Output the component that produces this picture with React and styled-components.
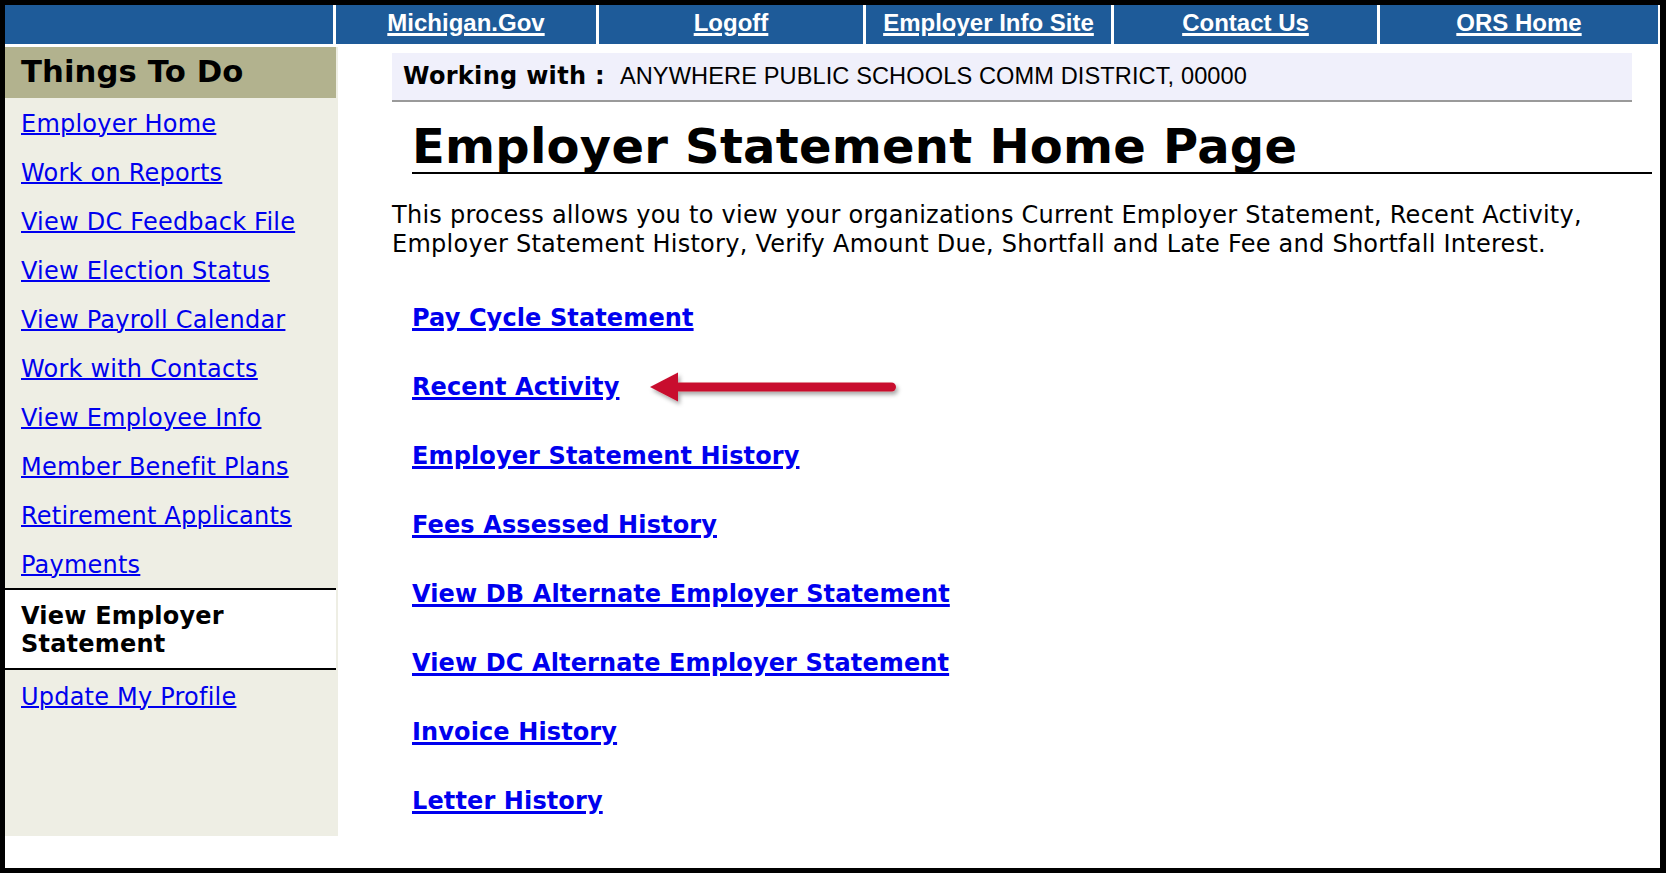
import styled, { createGlobalStyle } from "styled-components";

const GlobalStyle = createGlobalStyle`
  html, body {
    margin: 0;
    padding: 0;
    background: #000;
  }
`;

const navLinks = ["Michigan.Gov", "Logoff", "Employer Info Site", "Contact Us", "ORS Home"];

const sideLinks = [
  "Employer Home",
  "Work on Reports",
  "View DC Feedback File",
  "View Election Status",
  "View Payroll Calendar",
  "Work with Contacts",
  "View Employee Info",
  "Member Benefit Plans",
  "Retirement Applicants",
  "Payments",
];

const statementLinks = [
  "Pay Cycle Statement",
  "Recent Activity",
  "Employer Statement History",
  "Fees Assessed History",
  "View DB Alternate Employer Statement",
  "View DC Alternate Employer Statement",
  "Invoice History",
  "Letter History",
];

const Arrow = () => (
  <ArrowSvg width="256" height="36" viewBox="0 0 256 36">
    <defs>
      <filter id="arrowShadow" x="-10%" y="-40%" width="120%" height="200%">
        <feDropShadow dx="2" dy="3" stdDeviation="2" floodColor="#000" floodOpacity="0.35" />
      </filter>
    </defs>
    <g filter="url(#arrowShadow)" fill="#c8102e">
      <rect x="26" y="13.4" width="222" height="9.2" rx="4.6" />
      <polygon points="2,18 30,3.5 30,32.5" />
    </g>
  </ArrowSvg>
);

const App = () => {
  return (
    <Page>
      <GlobalStyle />
      <Nav>
        <NavCell />
        {navLinks.map((label) => (
          <NavCell key={label}>
            <NavLink href="#">{label}</NavLink>
          </NavCell>
        ))}
      </Nav>
      <Body>
        <Sidebar>
          <SideTitle>Things To Do</SideTitle>
          {sideLinks.map((label) => (
            <SideItem key={label}>
              <SideLink href="#">{label}</SideLink>
            </SideItem>
          ))}
          <SideCurrent>View Employer Statement</SideCurrent>
          <SideItem $afterCurrent>
            <SideLink href="#">Update My Profile</SideLink>
          </SideItem>
        </Sidebar>
        <Main>
          <WorkingBar>
            <WorkingLabel>Working with :</WorkingLabel>
            <WorkingValue>ANYWHERE PUBLIC SCHOOLS COMM DISTRICT, 00000</WorkingValue>
          </WorkingBar>
          <Title>Employer Statement Home Page</Title>
          <Intro>
            This process allows you to view your organizations Current Employer Statement, Recent
            Activity, Employer Statement History, Verify Amount Due, Shortfall and Late Fee and
            Shortfall Interest.
          </Intro>
          <LinkList>
            {statementLinks.map((label) => (
              <LinkRow key={label}>
                <StatementLink href="#">{label}</StatementLink>
                {label === "Recent Activity" && <Arrow />}
              </LinkRow>
            ))}
          </LinkList>
        </Main>
      </Body>
    </Page>
  );
};

const Page = styled.div`
  margin: 5px 6px 0 5px;
  height: 863px;
  background: #fff;
  overflow: hidden;
  display: flex;
  flex-direction: column;
`;

const Nav = styled.nav`
  display: grid;
  grid-template-columns: 328px 260px 264px 245px 263px 278px;
  column-gap: 3px;
  margin-bottom: 3px;
`;

const NavCell = styled.div`
  height: 39px;
  box-sizing: border-box;
  padding-top: 4px;
  background: #1e5b99;
  text-align: center;
  line-height: 28px;
`;

const NavLink = styled.a`
  color: #fff;
  font-family: "Liberation Sans", Arial, sans-serif;
  font-weight: bold;
  font-size: 24px;
  text-decoration: underline;
  text-decoration-thickness: 3px;
  text-underline-offset: 2px;
`;

const Body = styled.div`
  display: flex;
  align-items: flex-start;
  flex: 1;
`;

const Sidebar = styled.aside`
  width: 333px;
  height: 789px;
  box-sizing: border-box;
  padding-right: 2px;
  background: #eeeee4;
  font-family: "DejaVu Sans", Verdana, sans-serif;
`;

const SideTitle = styled.h2`
  margin: 0;
  height: 51px;
  box-sizing: border-box;
  padding: 7px 16px 0;
  background: #b2b28e;
  color: #000;
  font-size: 30.7px;
  font-weight: bold;
  line-height: 35px;
  letter-spacing: 0.1px;
`;

const SideItem = styled.div`
  padding: ${(p) => (p.$afterCurrent ? "13px" : "12px")} 14px 9px 16px;
  font-size: 24px;
  line-height: 28px;
  letter-spacing: 0.22px;
`;

const SideLink = styled.a`
  color: #0000ee;
  text-decoration: underline;
  text-decoration-thickness: 2px;
  text-underline-offset: 1px;
`;

const SideCurrent = styled.div`
  padding: 12px 16px 10px;
  background: #fff;
  border-top: 2px solid #000;
  border-bottom: 2px solid #000;
  color: #000;
  font-size: 24px;
  font-weight: bold;
  line-height: 28px;
  letter-spacing: 0.2px;
`;

const Main = styled.main`
  flex: 1;
  min-width: 0;
  padding: 6px 28px 0 54px;
  font-family: "DejaVu Sans", Verdana, sans-serif;
  color: #000;
`;

const WorkingBar = styled.div`
  height: 47px;
  padding: 0 11px;
  background: #f0f0fb;
  border-bottom: 2px solid #9a9a9a;
  line-height: 47px;
  font-size: 24px;
  white-space: nowrap;
`;

const WorkingLabel = styled.span`
  font-weight: bold;
  letter-spacing: 0.3px;
`;

const WorkingValue = styled.span`
  margin-left: 15px;
  font-family: "Liberation Sans", Arial, sans-serif;
  font-size: 23.6px;
  letter-spacing: 0.1px;
`;

const Title = styled.h1`
  margin: 18px -20px 0 20px;
  border-bottom: 2px solid #000;
  font-size: 48px;
  font-weight: bold;
  line-height: 52px;
  letter-spacing: 0.25px;
`;

const Intro = styled.p`
  margin: 27px 0 0;
  font-size: 24px;
  line-height: 29px;
  letter-spacing: 0.26px;
`;

const LinkList = styled.div`
  display: flex;
  flex-direction: column;
  gap: 41px;
  margin: 45px 0 0 20px;
`;

const LinkRow = styled.div`
  display: flex;
  align-items: center;
  line-height: 28px;
`;

const StatementLink = styled.a`
  color: #0000ee;
  font-size: 24px;
  font-weight: bold;
  letter-spacing: 0.12px;
  text-decoration: underline;
  text-decoration-thickness: 3px;
  text-underline-offset: 2px;
`;

const ArrowSvg = styled.svg`
  flex: none;
  margin: -4px 0 -4px 29px;
  overflow: visible;
`;

export default App;
